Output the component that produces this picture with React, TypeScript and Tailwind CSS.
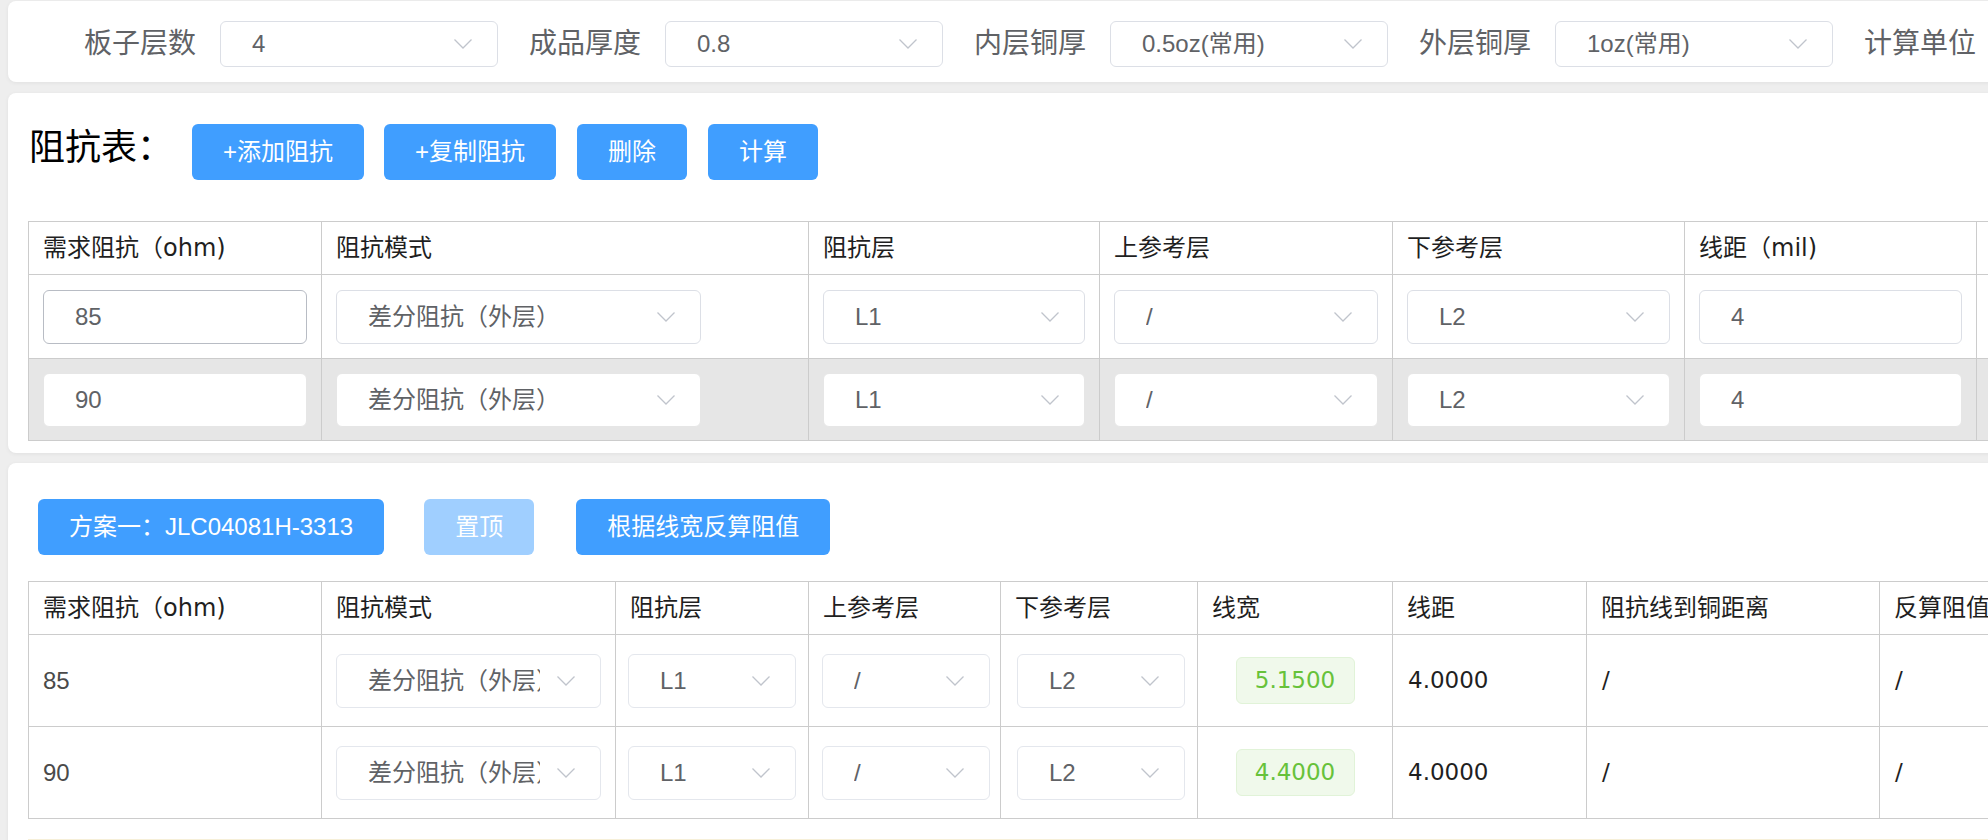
import React from 'react'

const SANS = "font-['Liberation_Sans','Noto_Sans_CJK_SC',sans-serif]"
const VERD = "font-['DejaVu_Sans','Noto_Sans_CJK_SC',sans-serif]"

function Chevron() {
  return (
    <svg width="20" height="12" viewBox="0 0 20 12" className="flex-shrink-0">
      <path d="M1.5 1.5 L10 10 L18.5 1.5" fill="none" stroke="#c0c4cc" strokeWidth="1.3" />
    </svg>
  )
}

interface SelectProps {
  value: string
  className?: string
  border?: string
}

function FakeSelect({ value, className = '', border = 'border-[#dcdfe6]' }: SelectProps) {
  return (
    <div
      className={`flex items-center bg-white border ${border} rounded-[6px] pl-[31px] pr-[24px] text-[24px] text-[#606266] ${className}`}
    >
      <span className="flex-1 min-w-0 overflow-hidden whitespace-nowrap mr-[16px]">{value}</span>
      <Chevron />
    </div>
  )
}

function FakeInput({ value, border = 'border-[#dcdfe6]' }: { value: string; border?: string }) {
  return (
    <div
      className={`flex items-center w-full h-[54px] bg-white border ${border} rounded-[6px] pl-[31px] text-[24px] text-[#606266]`}
    >
      {value}
    </div>
  )
}

function Btn({ children, className = '' }: { children: React.ReactNode; className?: string }) {
  return (
    <button
      type="button"
      className={`h-[56px] px-[31px] rounded-[6px] bg-[#409eff] text-white text-[24px] whitespace-nowrap flex-shrink-0 ${className}`}
    >
      {children}
    </button>
  )
}

const TOP_FIELDS = [
  { label: '板子层数', value: '4' },
  { label: '成品厚度', value: '0.8' },
  { label: '内层铜厚', value: '0.5oz(常用)' },
  { label: '外层铜厚', value: '1oz(常用)' },
  { label: '计算单位', value: 'mil' },
]

const T1_COLS = [293, 487, 291, 293, 292, 292, 292]
const T1_HEAD = ['需求阻抗（ohm)', '阻抗模式', '阻抗层', '上参考层', '下参考层', '线距（mil)', '线宽（mil)']
const T1_ROWS = [
  { ohm: '85', hover: true },
  { ohm: '90', hover: false },
]

const T2_COLS = [293, 294, 193, 192, 197, 195, 194, 293, 293, 300]
const T2_HEAD = ['需求阻抗（ohm)', '阻抗模式', '阻抗层', '上参考层', '下参考层', '线宽', '线距', '阻抗线到铜距离', '反算阻值', '操作']
const T2_ROWS = [
  { ohm: '85', width: '5.1500' },
  { ohm: '90', width: '4.4000' },
]

const cell = 'border border-[#cccccc] align-middle'

export default function App() {
  return (
    <div className={`h-[840px] w-full overflow-hidden bg-[#eeeeee] ${SANS}`}>
      {/* parameters bar */}
      <div className="ml-[8px] mt-px h-[81px] w-[2600px] rounded-[8px] bg-white shadow-[0_1px_4px_rgba(0,0,0,0.06)] flex items-center pl-[76px] pt-[4px]">
        {TOP_FIELDS.map((f) => (
          <React.Fragment key={f.label}>
            <span className="w-[112px] mr-[24px] flex-shrink-0 text-[28px] text-[#606266] whitespace-nowrap">
              {f.label}
            </span>
            <FakeSelect value={f.value} className="w-[278px] h-[46px] mr-[31px] flex-shrink-0" />
          </React.Fragment>
        ))}
      </div>

      {/* impedance table */}
      <div className="ml-[8px] mt-[11px] w-[2600px] rounded-[8px] bg-white shadow-[0_1px_4px_rgba(0,0,0,0.06)] pl-[20px] pt-[31px] pb-[12px]">
        <div className="flex items-center h-[56px]">
          <span className="w-[164px] mb-[8px] pl-px text-[36px] leading-[40px] text-black whitespace-nowrap">阻抗表：</span>
          <Btn>+添加阻抗</Btn>
          <Btn className="ml-[20px]">+复制阻抗</Btn>
          <Btn className="ml-[21px]">删除</Btn>
          <Btn className="ml-[21px]">计算</Btn>
        </div>
        <table className="mt-[41px] w-[2240px] table-fixed border-collapse">
          <colgroup>
            {T1_COLS.map((w, i) => (
              <col key={i} style={{ width: w }} />
            ))}
          </colgroup>
          <thead>
            <tr className="h-[53px]">
              {T1_HEAD.map((h) => (
                <th key={h} className={`${cell} px-[14px] text-left font-normal text-[24px] text-[#1f1f1f] whitespace-nowrap ${VERD}`}>
                  {h}
                </th>
              ))}
            </tr>
          </thead>
          <tbody>
            {T1_ROWS.map((r, i) => {
              const b = i === 0 ? 'border-[#dcdfe6]' : 'border-[#e6e6e6]'
              return (
                <tr key={r.ohm} className={i === 0 ? 'h-[84px] bg-white' : 'h-[82px] bg-[#e6e6e6]'}>
                  <td className={`${cell} px-[14px]`}>
                    <FakeInput value={r.ohm} border={r.hover ? 'border-[#b8bcc4]' : b} />
                  </td>
                  <td className={`${cell} px-[14px]`}>
                    <FakeSelect value="差分阻抗（外层）" className="w-[365px] h-[54px]" border={b} />
                  </td>
                  <td className={`${cell} px-[14px]`}>
                    <FakeSelect value="L1" className="w-full h-[54px]" border={b} />
                  </td>
                  <td className={`${cell} px-[14px]`}>
                    <FakeSelect value="/" className="w-full h-[54px]" border={b} />
                  </td>
                  <td className={`${cell} px-[14px]`}>
                    <FakeSelect value="L2" className="w-full h-[54px]" border={b} />
                  </td>
                  <td className={`${cell} px-[14px]`}>
                    <FakeInput value="4" border={b} />
                  </td>
                  <td className={`${cell} px-[14px]`}>
                    <FakeInput value="5" border={b} />
                  </td>
                </tr>
              )
            })}
          </tbody>
        </table>
      </div>

      {/* solution */}
      <div className="ml-[8px] mt-[10px] w-[2600px] h-[500px] rounded-[8px] bg-white shadow-[0_1px_4px_rgba(0,0,0,0.06)] pl-[20px] pt-[36px]">
        <div className="flex items-center">
          <Btn className="ml-[10px]">方案一：JLC04081H-3313</Btn>
          <Btn className="ml-[40px] bg-[#a0cfff] cursor-not-allowed">置顶</Btn>
          <Btn className="ml-[42px]">根据线宽反算阻值</Btn>
        </div>
        <table className="mt-[26px] w-[2444px] table-fixed border-collapse">
          <colgroup>
            {T2_COLS.map((w, i) => (
              <col key={i} style={{ width: w }} />
            ))}
          </colgroup>
          <thead>
            <tr className="h-[53px]">
              {T2_HEAD.map((h) => (
                <th key={h} className={`${cell} px-[14px] text-left font-normal text-[24px] text-[#1f1f1f] whitespace-nowrap overflow-hidden ${VERD}`}>
                  {h}
                </th>
              ))}
            </tr>
          </thead>
          <tbody>
            {T2_ROWS.map((r) => (
              <tr key={r.ohm} className="h-[92px]">
                <td className={`${cell} px-[14px] text-[24px] text-[#4a4a4a]`}>{r.ohm}</td>
                <td className={`${cell} px-[14px]`}>
                  <FakeSelect value="差分阻抗（外层）" className="w-[265px] h-[54px]" border="border-[#e4e7ed]" />
                </td>
                <td className={`${cell} px-[12px]`}>
                  <FakeSelect value="L1" className="w-[168px] h-[54px]" border="border-[#e4e7ed]" />
                </td>
                <td className={`${cell} px-[13px]`}>
                  <FakeSelect value="/" className="w-[168px] h-[54px]" border="border-[#e4e7ed]" />
                </td>
                <td className={`${cell} px-[16px]`}>
                  <FakeSelect value="L2" className="w-[168px] h-[54px]" border="border-[#e4e7ed]" />
                </td>
                <td className={`${cell} px-[14px]`}>
                  <div
                    className={`mx-auto w-[119px] h-[47px] flex items-center justify-center rounded-[6px] border border-[#e1f3d8] bg-[#f0f9eb] text-[23px] text-[#67c23a] ${VERD}`}
                  >
                    {r.width}
                  </div>
                </td>
                <td className={`${cell} px-[15px] text-[23px] text-[#1f1f1f] ${VERD}`}>4.0000</td>
                <td className={`${cell} px-[15px] text-[23px] text-[#1f1f1f] ${VERD}`}>/</td>
                <td className={`${cell} px-[15px] text-[23px] text-[#1f1f1f] ${VERD}`}>/</td>
                <td className={`${cell} px-[15px]`} />
              </tr>
            ))}
          </tbody>
        </table>
        <div className="mt-[20px] w-[2400px] h-[60px] bg-[#f6efd8]" />
      </div>
    </div>
  )
}
